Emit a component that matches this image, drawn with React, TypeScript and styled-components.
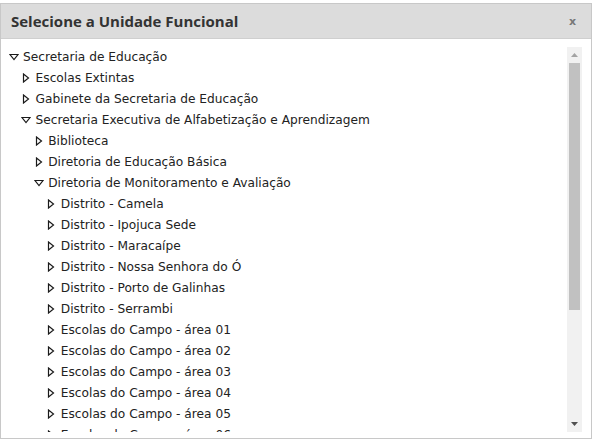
import React from "react";
import styled, { createGlobalStyle } from "styled-components";

const Global = createGlobalStyle`
  html, body { margin: 0; padding: 0; background: #ffffff; }
  body { font-family: "DejaVu Sans", Verdana, sans-serif; }
`;

const Page = styled.div`
  padding-top: 3px;
  width: 594px;
  height: 439px;
`;

const Dialog = styled.div`
  width: 590px;
  height: 434px;
  border: 1px solid #c8c8c8;
  background: #fff;
  display: flex;
  flex-direction: column;
  box-sizing: content-box;
`;

const Header = styled.div`
  height: 34px;
  background: #dcdcdc;
  display: flex;
  align-items: center;
  justify-content: space-between;
  padding: 0 15px 0 10px;
  border-bottom: 1px solid #cfcfcf;
`;

const Title = styled.span`
  font-family: "Open Sans", Lato, sans-serif;
  font-weight: 700;
  font-size: 15px;
  color: #333;
`;

const Close = styled.span`
  font-family: "DejaVu Sans", sans-serif;
  font-weight: 700;
  font-size: 11px;
  color: #777;
`;

const Body = styled.div`
  flex: 1;
  padding: 8px 9px 6px 0;
  display: flex;
  min-height: 0;
`;

const Viewport = styled.div`
  flex: 1;
  overflow: hidden;
`;

const ScrollBar = styled.div`
  width: 15px;
  background: #f1f1f1;
  display: flex;
  flex-direction: column;
`;

const ScrollButton = styled.div`
  height: 16px;
  display: flex;
  align-items: center;
  justify-content: center;
`;

const Track = styled.div`
  flex: 1;
  padding: 0 2px;
`;

const Thumb = styled.div`
  background: #c1c1c1;
`;

const List = styled.ul`
  list-style: none;
  margin: -1px 0 0 0;
  padding: 0;
`;

const Row = styled.li<{ $level: number }>`
  height: 21px;
  display: flex;
  align-items: center;
  padding-left: ${(p) => 7 + p.$level * 12.6}px;
  font-size: 12.2px;
  color: #222;
  white-space: nowrap;
`;

const Toggle = styled.span`
  width: 11px;
  margin-right: 4px;
  display: inline-flex;
  align-items: center;
  justify-content: center;
`;

type Node = { label: string; level: number; open?: boolean };

const nodes: Node[] = [
  { label: "Secretaria de Educação", level: 0, open: true },
  { label: "Escolas Extintas", level: 1 },
  { label: "Gabinete da Secretaria de Educação", level: 1 },
  { label: "Secretaria Executiva de Alfabetização e Aprendizagem", level: 1, open: true },
  { label: "Biblioteca", level: 2 },
  { label: "Diretoria de Educação Básica", level: 2 },
  { label: "Diretoria de Monitoramento e Avaliação", level: 2, open: true },
  { label: "Distrito - Camela", level: 3 },
  { label: "Distrito - Ipojuca Sede", level: 3 },
  { label: "Distrito - Maracaípe", level: 3 },
  { label: "Distrito - Nossa Senhora do Ó", level: 3 },
  { label: "Distrito - Porto de Galinhas", level: 3 },
  { label: "Distrito - Serrambi", level: 3 },
  { label: "Escolas do Campo - área 01", level: 3 },
  { label: "Escolas do Campo - área 02", level: 3 },
  { label: "Escolas do Campo - área 03", level: 3 },
  { label: "Escolas do Campo - área 04", level: 3 },
  { label: "Escolas do Campo - área 05", level: 3 },
  { label: "Escolas do Campo - área 06", level: 3 },
  { label: "Escolas do Campo - área 07", level: 3 },
  { label: "Escolas do Campo - área 08", level: 3 },
  { label: "Escolas do Campo - área 09", level: 3 },
  { label: "Escolas do Campo - área 10", level: 3 },
  { label: "Diretoria de Ensino", level: 2 },
  { label: "Secretaria Executiva de Gestão", level: 1 },
  { label: "Secretaria Executiva de Planejamento", level: 1 },
];

const Arrow = ({ open }: { open?: boolean }) =>
  open ? (
    <svg width="10" height="8" viewBox="0 0 10 8">
      <path d="M1 1.5 H9 L5 6.5 Z" fill="#fff" stroke="#1a1a1a" strokeWidth="1.2" strokeLinejoin="miter" />
    </svg>
  ) : (
    <svg width="8" height="10" viewBox="0 0 8 10">
      <path d="M1.5 1 V9 L6.5 5 Z" fill="#fff" stroke="#1a1a1a" strokeWidth="1.2" strokeLinejoin="miter" />
    </svg>
  );

const visibleRatio = 0.7;

export default function App() {
  return (
    <>
      <Global />
      <Page>
        <Dialog>
          <Header>
            <Title>Selecione a Unidade Funcional</Title>
            <Close>x</Close>
          </Header>
          <Body>
            <Viewport>
              <List>
                {nodes.map((n, i) => (
                  <Row key={i} $level={n.level}>
                    <Toggle>
                      <Arrow open={n.open} />
                    </Toggle>
                    {n.label}
                  </Row>
                ))}
              </List>
            </Viewport>
            <ScrollBar>
              <ScrollButton>
                <svg width="7" height="4" viewBox="0 0 7 4">
                  <path d="M0 4 L3.5 0 L7 4Z" fill="#a3a3a3" />
                </svg>
              </ScrollButton>
              <Track>
                <Thumb style={{ height: `${visibleRatio * 100}%` }} />
              </Track>
              <ScrollButton>
                <svg width="7" height="4" viewBox="0 0 7 4">
                  <path d="M0 0 L3.5 4 L7 0Z" fill="#505050" />
                </svg>
              </ScrollButton>
            </ScrollBar>
          </Body>
        </Dialog>
      </Page>
    </>
  );
}
